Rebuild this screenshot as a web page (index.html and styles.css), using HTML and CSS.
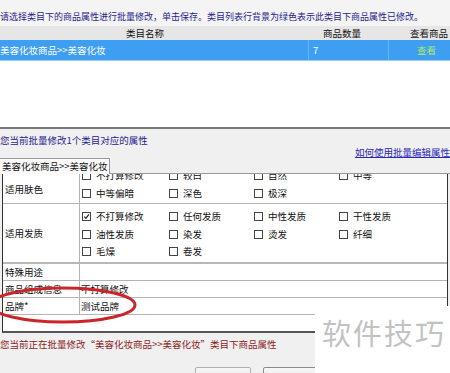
FILE: index.html
```html
<!DOCTYPE html>
<html lang="zh-CN">
<head>
  <meta charset="UTF-8">
  <title>批量编辑属性</title>
  <link rel="stylesheet" href="styles.css">
</head>
<body>
  <div class="top">
    <p class="tip">请选择类目下的商品属性进行批量修改，单击保存。类目列表行背景为绿色表示此类目下商品属性已修改。</p>
    <div class="cat-head">
      <span class="c-name">类目名称</span>
      <span class="c-count">商品数量</span>
      <span class="c-view">查看商品</span>
    </div>
    <div class="cat-row selected">
      <span class="c-name">美容化妆商品&gt;&gt;美容化妆</span>
      <span class="c-count">7</span>
      <span class="c-view"><a class="view-link">查看</a></span>
    </div>
    <div class="cat-blank"></div>
  </div>

  <div class="panel">
    <div class="panel-head">
      <span class="hint">您当前批量修改1个类目对应的属性</span>
      <a class="help">如何使用批量编辑属性</a>
    </div>

    <div class="tabs">
      <span class="tab">美容化妆商品&gt;&gt;美容化妆</span>
      <span class="tab-rest"></span>
    </div>

    <div class="props">
      <!-- skin row is scrolled, first line only half visible -->
      <div class="prop skin">
        <div class="label">适用肤色</div>
        <div class="value">
          <div class="opts">
            <span class="opt"><span class="box"></span>不打算修改</span>
            <span class="opt"><span class="box"></span>较白</span>
            <span class="opt"><span class="box"></span>自然</span>
            <span class="opt"><span class="box"></span>中等</span>
            <span class="opt"><span class="box"></span>中等偏暗</span>
            <span class="opt"><span class="box"></span>深色</span>
            <span class="opt"><span class="box"></span>极深</span>
          </div>
        </div>
      </div>

      <div class="prop hair">
        <div class="label">适用发质</div>
        <div class="value">
          <div class="opts">
            <span class="opt"><span class="box checked"><svg viewBox="0 0 7 7" width="7" height="7"><path d="M1.2 3.6 L2.9 5.3 L5.9 1.4" fill="none" stroke="#222" stroke-width="1.2"/></svg></span>不打算修改</span>
            <span class="opt"><span class="box"></span>任何发质</span>
            <span class="opt"><span class="box"></span>中性发质</span>
            <span class="opt"><span class="box"></span>干性发质</span>
            <span class="opt"><span class="box"></span>油性发质</span>
            <span class="opt"><span class="box"></span>染发</span>
            <span class="opt"><span class="box"></span>烫发</span>
            <span class="opt"><span class="box"></span>纤细</span>
            <span class="opt"><span class="box"></span>毛燥</span>
            <span class="opt"><span class="box"></span>卷发</span>
          </div>
        </div>
      </div>

      <div class="prop simple">
        <div class="label">特殊用途</div>
        <div class="value"></div>
      </div>
      <div class="prop simple">
        <div class="label">商品组成信息</div>
        <div class="value">不打算修改</div>
      </div>
      <div class="prop simple">
        <div class="label">品牌*</div>
        <div class="value">测试品牌</div>
      </div>
      <div class="props-blank"></div>
    </div>

    <p class="status">您当前正在批量修改“美容化妆商品&gt;&gt;美容化妆”类目下商品属性</p>

    <div class="actions">
      <button disabled>保存</button>
      <button>取消</button>
    </div>
  </div>

  <div class="watermark">软件技巧</div>

  <svg class="ring" width="145" height="44" viewBox="0 0 145 44">
    <ellipse cx="63" cy="21" rx="72" ry="17" fill="none" stroke="#c9262a" stroke-width="3"/>
  </svg>
</body>
</html>
```

FILE: styles.css
```css
body {
  margin: 0;
  width: 450px;
  height: 373px;
  overflow: hidden;
  position: relative;
  font-family: "Noto Sans CJK SC", "Noto Sans", sans-serif;
  font-size: 9.5px;
  color: #111;
  background: #f0f0f0;
}
.top {
  background: #f4f4f4;
}
.tip {
  margin: 0;
  padding-top: 11px;
  height: 15px;
  line-height: 12px;
  font-size: 9px;
  color: #26238c;
  white-space: nowrap;
}
.cat-head,
.cat-row {
  display: grid;
  grid-template-columns: 308px 80px 1fr;
  white-space: nowrap;
}
.cat-head {
  height: 14px;
  line-height: 14px;
  background: #e6e6e6;
}
.cat-head .c-name {
  text-align: center;
  padding-right: 18px;
}
.cat-head .c-count {
  padding-left: 15px;
}
.cat-head .c-view {
  padding-left: 22px;
}
.cat-row.selected {
  height: 20px;
  line-height: 20px;
  background: #3d9ef2;
  color: #fff;
}
.cat-row .c-count {
  padding-left: 4px;
  border-left: 1px solid #6ab4f5;
}
.cat-row .c-view {
  padding-left: 28px;
  border-left: 1px solid #6ab4f5;
}
.view-link {
  color: #aeea68;
}
.cat-blank {
  height: 66px;
  background: #fff;
  border-top: 1px solid #9ccaf0;
  border-bottom: 2px solid #777;
}
.panel-head {
  display: flex;
  justify-content: space-between;
  height: 29px;
  white-space: nowrap;
}
.hint {
  display: block;
  padding-top: 5px;
  line-height: 12px;
  color: #26238c;
}
.help {
  align-self: flex-end;
  line-height: 12px;
  color: #2a2ab8;
  text-decoration: underline;
}
.tabs {
  display: flex;
  height: 16px;
}
.tab {
  box-sizing: border-box;
  width: 110px;
  padding-left: 2px;
  line-height: 15px;
  background: #fbfbfb;
  border-top: 1px solid #9a9a9a;
  border-right: 1px solid #9a9a9a;
  white-space: nowrap;
}
.tab-rest {
  flex: 1;
  border-bottom: 1px solid #9a9a9a;
}
.props {
  margin-left: 2px;
  width: 446px;
  box-sizing: border-box;
  background: #fff;
  border-left: 1px solid #333;
  border-right: 1px solid #333;
  border-bottom: 2px solid #555;
}
.prop {
  display: grid;
  grid-template-columns: 77px 1fr;
  border-bottom: 1px solid #b4b4b4;
}
.label {
  display: flex;
  align-items: center;
  padding-left: 2px;
  border-right: 1px solid #b4b4b4;
  white-space: nowrap;
}
.value {
  padding-left: 1px;
  white-space: nowrap;
}
.skin {
  height: 29px;
}
.skin .value {
  overflow: hidden;
}
.skin .opts {
  margin-top: -7px;
}
.hair {
  height: 58px;
  border-bottom: 2px solid #b8b8b8;
}
.hair .opts {
  padding-top: 4px;
}
.opts {
  display: grid;
  grid-template-columns: 87px 85px 85px 1fr;
  padding-left: 1px;
  line-height: 17.5px;
}
.opt {
  display: flex;
  align-items: center;
  gap: 5px;
}
.box {
  display: inline-flex;
  width: 7px;
  height: 7px;
  border: 1px solid #444;
  background: #fff;
}
.simple {
  height: 16px;
  line-height: 16px;
}
.props-blank {
  height: 16px;
}
.status {
  margin: 0;
  padding-top: 5px;
  line-height: 12px;
  color: #8b1c1c;
  white-space: nowrap;
}
.actions {
  display: flex;
  gap: 12px;
  padding-top: 17px;
  padding-left: 195px;
}
button {
  width: 56px;
  height: 22px;
  padding: 0;
  font-family: inherit;
  font-size: 9.5px;
  color: #111;
  background: linear-gradient(#f7f7f7, #dedede);
  border: 1px solid #8a8a8a;
  border-radius: 2px;
}
button:disabled {
  color: #a0a0a0;
  border-color: #b0b0b0;
}
.watermark {
  position: absolute;
  right: 0;
  bottom: 0;
  box-sizing: border-box;
  width: 135px;
  height: 67px;
  padding: 12px 0 0 7px;
  background: #fff;
  color: #c2c2c2;
  font-size: 29px;
  line-height: 29px;
  letter-spacing: 2px;
  white-space: nowrap;
}
.ring {
  position: absolute;
  left: 0;
  top: 284px;
}
```
